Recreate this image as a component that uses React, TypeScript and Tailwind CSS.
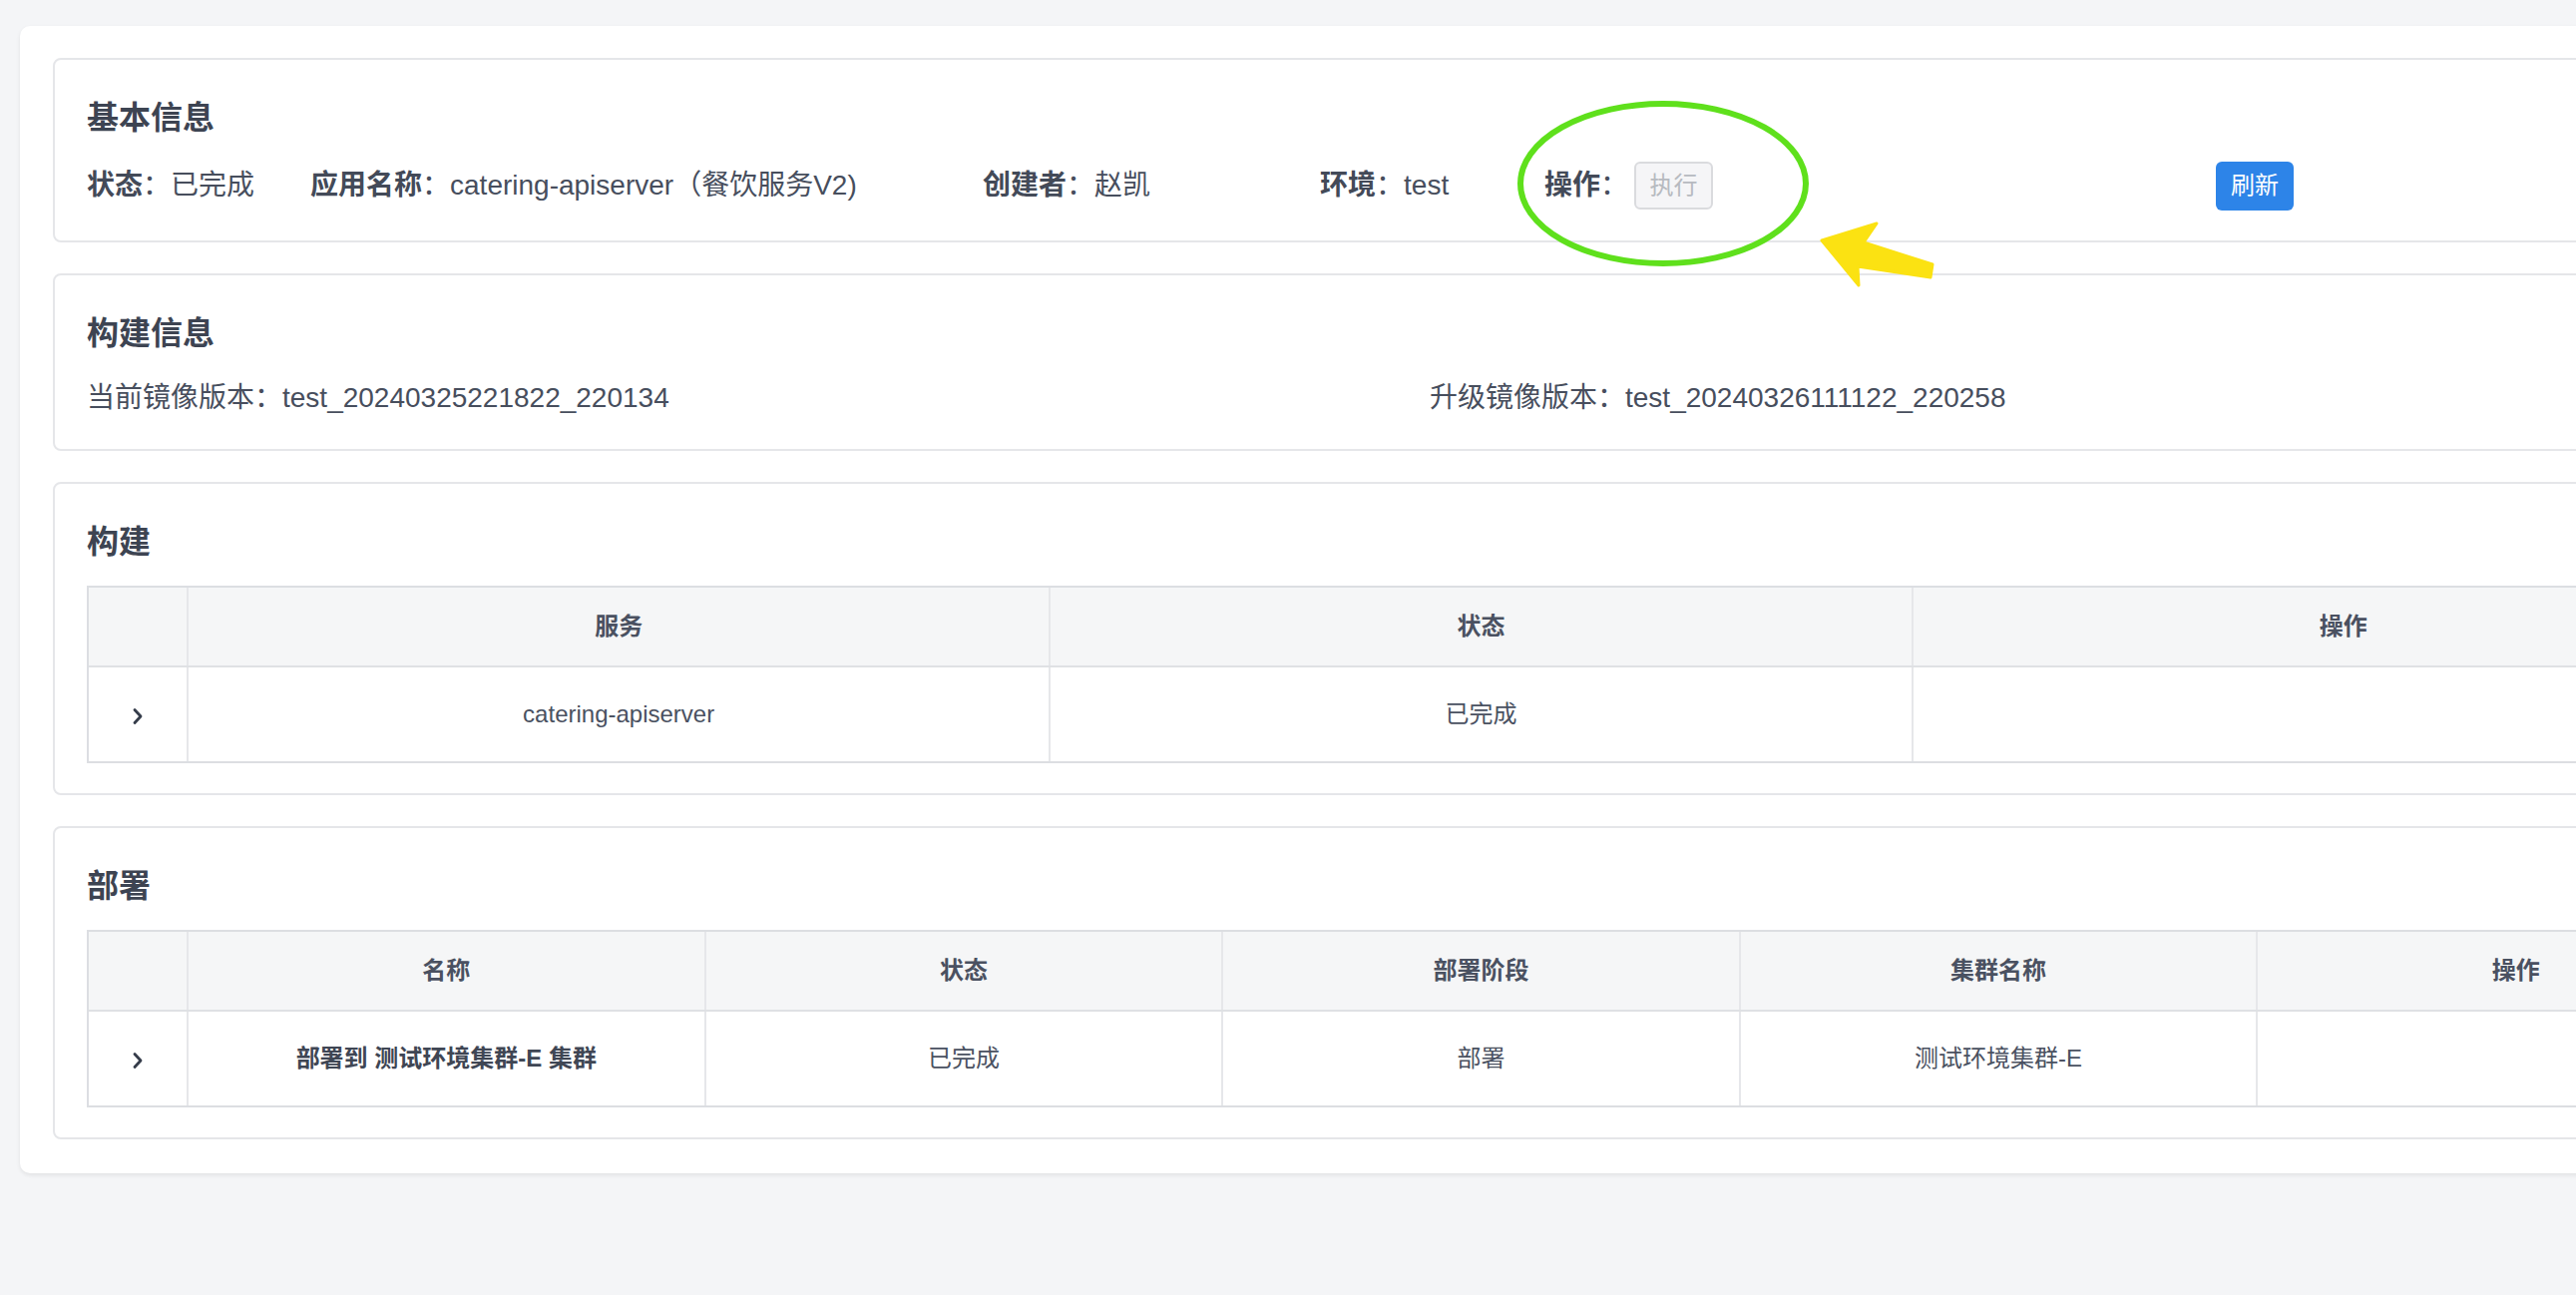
import React from "react";

const FONT = "font-['Liberation_Sans','Noto_Sans_CJK_SC',sans-serif]";

function Card({ title, children, bottom = "pb-[31px]" }: { title: string; children: React.ReactNode; bottom?: string }) {
  return (
    <div className={`border-2 border-[#e5e6e9] rounded-[8px] px-[32px] pt-[34px] ${bottom}`}>
      <div className="h-[48px] text-[32px] leading-[48px] font-semibold text-[#3d4452]">{title}</div>
      <div className="mt-[20px]">{children}</div>
    </div>
  );
}

function Field({ label, value, width }: { label: string; value: string; width: string }) {
  return (
    <div className={`${width} shrink-0 flex items-center text-[28px] text-[#474e5d] whitespace-nowrap`}>
      <span className="font-semibold text-[#434a58]">{label}</span>
      <span>：{value}</span>
    </div>
  );
}

function Chevron() {
  return (
    <svg width="12" height="18" viewBox="0 0 12 18" fill="none">
      <path d="M3 2.5 L9 9 L3 15.5" stroke="#353c4a" strokeWidth="2.8" strokeLinecap="round" strokeLinejoin="round" />
    </svg>
  );
}

type Cell = { text: string; bold?: boolean };

function DataTable({ cols, headers, row }: { cols: string; headers: string[]; row: Cell[] }) {
  return (
    <div className="w-[2693px] border-t-2 border-b-2 border-l-2 border-[#dcdee2]">
      <div className={`grid ${cols} h-[80px] bg-[#f5f6f7] border-b-2 border-[#dfe1e4]`}>
        <div />
        {headers.map((h) => (
          <div
            key={h}
            className="border-l-2 border-[#e6e7ea] flex items-center justify-center text-[24px] font-semibold text-[#4a5161]"
          >
            {h}
          </div>
        ))}
      </div>
      <div className={`grid ${cols} h-[94px] bg-white`}>
        <div className="flex items-center justify-center pt-[4px]">
          <Chevron />
        </div>
        {row.map((c, i) => (
          <div
            key={i}
            className={`border-l-2 border-[#e6e7ea] flex items-center justify-center text-[24px] ${
              c.bold ? "font-semibold text-[#3f4654]" : "text-[#4a5161]"
            }`}
          >
            {c.text}
          </div>
        ))}
      </div>
    </div>
  );
}

export default function App() {
  return (
    <div className={`relative w-[2582px] h-[1298px] overflow-hidden bg-[#f4f5f7] ${FONT}`}>
      <div className="w-[2900px] pt-[26px] pl-[20px]">
        <div className="w-[2827px] bg-white rounded-[10px] shadow-[0_2px_4px_rgba(0,0,0,0.08)] px-[33px] pt-[32px] pb-[34px] flex flex-col gap-[31px]">
          {/* basic info */}
          <Card title="基本信息">
            <div className="h-[48px] flex items-center">
              <Field label="状态" value="已完成" width="w-[224px]" />
              <Field label="应用名称" value="catering-apiserver（餐饮服务V2)" width="w-[674px]" />
              <Field label="创建者" value="赵凯" width="w-[338px]" />
              <Field label="环境" value="test" width="w-[225px]" />
              <div className="w-[673px] shrink-0 flex items-center text-[28px] text-[#474e5d] whitespace-nowrap">
                <span className="font-semibold text-[#434a58]">操作</span>
                <span>：</span>
                <button
                  disabled
                  className="ml-[6px] h-[48px] w-[79px] rounded-[6px] border-2 border-[#dadbde] bg-[#f5f5f7] text-[24px] text-[#b7bac0] flex items-center justify-center"
                >
                  执行
                </button>
              </div>
              <button className="h-[49px] w-[78px] rounded-[6px] bg-[#2d84e8] text-white text-[24px] flex items-center justify-center">
                刷新
              </button>
            </div>
          </Card>

          {/* image versions */}
          <Card title="构建信息" bottom="pb-[30px]">
            <div className="h-[42px] flex items-center text-[28px] text-[#474e5d] whitespace-nowrap">
              <div className="w-[1346px] shrink-0">当前镜像版本：test_20240325221822_220134</div>
              <div>升级镜像版本：test_20240326111122_220258</div>
            </div>
          </Card>

          {/* build */}
          <Card title="构建" bottom="pb-[30px]">
            <DataTable
              cols="grid-cols-[98px_repeat(3,1fr)]"
              headers={["服务", "状态", "操作"]}
              row={[{ text: "catering-apiserver" }, { text: "已完成" }, { text: "" }]}
            />
          </Card>

          {/* deploy */}
          <Card title="部署" bottom="pb-[30px]">
            <DataTable
              cols="grid-cols-[98px_repeat(5,1fr)]"
              headers={["名称", "状态", "部署阶段", "集群名称", "操作"]}
              row={[
                { text: "部署到 测试环境集群-E 集群", bold: true },
                { text: "已完成" },
                { text: "部署" },
                { text: "测试环境集群-E" },
                { text: "" },
              ]}
            />
          </Card>
        </div>
      </div>

      {/* hand-drawn highlight over the action field */}
      <svg className="absolute inset-0 pointer-events-none" width="2582" height="1298" viewBox="0 0 2582 1298">
        <ellipse cx="1667" cy="184" rx="143" ry="80" fill="none" stroke="#5fe01c" strokeWidth="6" />
        <polygon
          points="1826,241 1881,224 1868,243 1937,265 1935,278 1862,267 1863,286"
          fill="#fbe212"
          stroke="#fbe212"
          strokeWidth="3"
          strokeLinejoin="round"
        />
      </svg>
    </div>
  );
}
